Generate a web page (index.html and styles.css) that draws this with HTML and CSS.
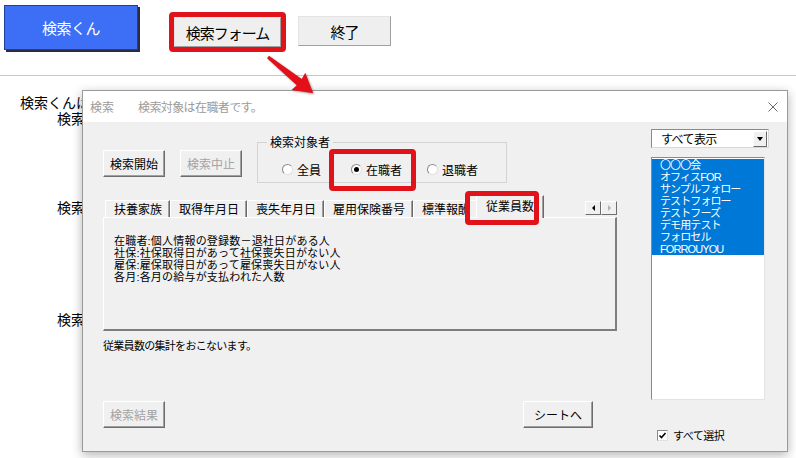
FILE: index.html
```html
<!DOCTYPE html>
<html lang="ja">

<head>
    <meta charset="UTF-8">
    <meta name="viewport" content="width=device-width, initial-scale=1.0">
    <title>検索くん</title>
    <link rel="stylesheet" href="styles.css">
</head>

<body>

    <!-- 上部のボタン -->
    <div class="toolbar">
        <button class="btn-main">検索くん</button>
        <div class="mark mark-form">
            <button class="btn-sheet">検索フォーム</button>
        </div>
        <button class="btn-sheet btn-quit">終了</button>
    </div>
    <hr class="rule">

    <!-- シートの説明文（フォームの後ろ） -->
    <div class="backdrop">
        <p class="bg-line bg-first">検索くんは</p>
        <p class="bg-line">検索</p>
        <p class="bg-line bg-second">検索</p>
        <p class="bg-line bg-third">検索</p>
    </div>

    <!-- 矢印 -->
    <svg class="arrow" width="64" height="50" viewBox="0 0 64 50">
        <g transform="translate(8 7) rotate(38.7)">
            <polygon points="0,-1.5 40,-4 39,-11 58,0 39,11 40,4 0,1.5" fill="#e3101a" />
        </g>
    </svg>

    <!-- 検索フォーム -->
    <div class="dialog">
        <div class="dialog-title">
            <span>検索</span>
            <span class="caption">検索対象は在職者です。</span>
            <svg class="close" width="10" height="10" viewBox="0 0 10 10">
                <path d="M0.5 0.5L9.5 9.5M9.5 0.5L0.5 9.5" stroke="#666" stroke-width="1" fill="none" />
            </svg>
        </div>

        <div class="dialog-body">
            <div class="main-col">

                <div class="control-row">
                    <button class="btn">検索開始</button>
                    <button class="btn is-disabled">検索中止</button>
                    <fieldset class="target-group">
                        <legend>検索対象者</legend>
                        <div class="radio-row">
                            <label class="radio-item opt-all"><span class="radio"></span>全員</label>
                            <label class="radio-item opt-active"><span class="radio is-checked"></span>在職者</label>
                            <label class="radio-item opt-retired"><span class="radio"></span>退職者</label>
                        </div>
                    </fieldset>
                    <div class="mark mark-active"></div>
                </div>

                <div class="tab-strip">
                    <div class="tab">扶養家族</div>
                    <div class="tab">取得年月日</div>
                    <div class="tab">喪失年月日</div>
                    <div class="tab">雇用保険番号</div>
                    <div class="tab">標準報酬</div>
                    <div class="tab is-current">従業員数</div>
                    <div class="tab-scroll">
                        <span class="scroll-btn"><i class="tri-left"></i></span>
                        <span class="scroll-btn"><i class="tri-right"></i></span>
                    </div>
                    <div class="mark mark-tab"></div>
                </div>

                <div class="tab-panel">
                    在職者:個人情報の登録数－退社日がある人<br>
                    社保:社保取得日があって社保喪失日がない人<br>
                    雇保:雇保取得日があって雇保喪失日がない人<br>
                    各月:各月の給与が支払われた人数
                </div>

                <p class="status">従業員数の集計をおこないます。</p>

                <div class="action-row">
                    <button class="btn is-disabled">検索結果</button>
                    <button class="btn btn-wide">シートへ</button>
                </div>
            </div>

            <div class="side-col">
                <div class="combo">
                    <span class="combo-text">すべて表示</span>
                    <span class="combo-btn"><i class="tri-down"></i></span>
                </div>
                <ul class="listbox">
                    <li>〇〇〇会</li>
                    <li>オフィスFOR</li>
                    <li>サンプルフォロー</li>
                    <li>テストフォロー</li>
                    <li>テストフーズ</li>
                    <li>デモ用テスト</li>
                    <li>フォロセル</li>
                    <li>FORROUYOU</li>
                </ul>
                <label class="check-row">
                    <span class="check">
                        <svg width="9" height="9" viewBox="0 0 9 9">
                            <path d="M1.5 4.5L3.5 6.5L7.5 2" stroke="#000" stroke-width="1.6" fill="none" />
                        </svg>
                    </span>
                    すべて選択
                </label>
            </div>
        </div>
    </div>

</body>

</html>
```

FILE: styles.css
```css
* {
    margin: 0;
    padding: 0;
    box-sizing: border-box;
}

body {
    width: 796px;
    height: 458px;
    position: relative;
    overflow: hidden;
    background: #fff;
    color: #000;
    font-family: "Noto Sans CJK JP", "Noto Sans", sans-serif;
}

button {
    font-family: inherit;
    color: #000;
}

/* 上部のボタン */
.toolbar {
    display: flex;
    align-items: flex-start;
    height: 75px;
    padding: 5px 0 0 4px;
}

.btn-main {
    width: 134px;
    height: 45px;
    margin-right: 31px;
    background: #3d6ff6;
    color: #fff;
    border: 1px solid #1d3f9e;
    box-shadow: 2px 2px 0 #2b2b3b;
    font-size: 15px;
    letter-spacing: -0.5px;
}

.btn-sheet {
    width: 107px;
    height: 30px;
    background: #efefef;
    border: 1px solid;
    border-color: #e4e4e4 #a0a0a0 #a0a0a0 #e4e4e4;
    font-size: 15px;
    letter-spacing: -1px;
}

.btn-quit {
    width: 93px;
    margin: 11px 0 0 12px;
}

/* 赤い囲み */
.mark {
    border: 5px solid #e0121a;
    border-radius: 4px;
}

.mark-form {
    margin-top: 7px;
}

.rule {
    border: 0;
    border-top: 1px solid #c8c8c8;
}

/* 後ろのシート */
.backdrop {
    font-family: "Liberation Sans", "Noto Sans CJK JP", sans-serif;
    font-size: 14px;
    line-height: 16px;
}

.bg-line {
    padding-left: 57px;
}

.bg-first {
    padding-left: 20px;
    margin-top: 19px;
}

.bg-second {
    margin-top: 73px;
}

.bg-third {
    margin-top: 96px;
}

.arrow {
    position: absolute;
    left: 260px;
    top: 50px;
    z-index: 5;
    filter: drop-shadow(1px 1px 1px rgba(0, 0, 0, 0.35));
}

/* フォーム */
.dialog {
    position: absolute;
    left: 82px;
    top: 90px;
    width: 706px;
    height: 362px;
    display: flex;
    flex-direction: column;
    background: #f0f0f0;
    border: 1px solid #9a9a9a;
    box-shadow: 0 3px 10px rgba(0, 0, 0, 0.3);
}

.dialog-title {
    height: 31px;
    display: flex;
    align-items: center;
    padding: 0 9px 0 7px;
    background: #fff;
    font-size: 12px;
    color: #9b9b9b;
}

.dialog-title .caption {
    margin-left: 24px;
    letter-spacing: -0.6px;
}

.close {
    margin-left: auto;
}

.dialog-body {
    flex: 1;
    display: flex;
    padding: 7px 18px 0 20px;
}

.main-col {
    width: 514px;
    display: flex;
    flex-direction: column;
    padding-top: 7px;
}

.btn {
    width: 62px;
    height: 27px;
    background: #f0f0f0;
    border: 1px solid;
    border-color: #fff #6d6d6d #6d6d6d #fff;
    box-shadow: inset -1px -1px 0 #a0a0a0;
    font-size: 12px;
}

.btn.is-disabled {
    color: #a3a3a3;
}

.btn-wide {
    width: 70px;
}

.control-row {
    display: flex;
    align-items: flex-start;
    position: relative;
}

.control-row .btn {
    margin-top: 14px;
}

.control-row .btn + .btn {
    margin-left: 15px;
}

.target-group {
    width: 250px;
    min-width: 0;
    margin-left: 15px;
    padding: 14px 0 6px;
    border: 1px solid #d3d3d3;
    font-size: 12px;
}

.target-group legend {
    margin-left: 9px;
    padding: 0 3px;
    font-size: 12px;
    line-height: 12px;
}

.radio-row {
    display: flex;
    align-items: center;
    height: 14px;
}

.radio-item {
    display: flex;
    align-items: center;
    gap: 4px;
}

.opt-all {
    margin-left: 24px;
}

.opt-active {
    margin-left: 30px;
}

.opt-retired {
    margin-left: 25px;
}

.radio {
    width: 11px;
    height: 11px;
    position: relative;
    border-radius: 50%;
    border: 1px solid;
    border-color: #8a8a8a #e0e0e0 #e0e0e0 #8a8a8a;
    background: #fff;
}

.radio.is-checked::after {
    content: "";
    position: absolute;
    left: 2px;
    top: 2px;
    width: 5px;
    height: 5px;
    border-radius: 50%;
    background: #000;
}

.mark-active {
    position: absolute;
    left: 226px;
    top: 13px;
    width: 87px;
    height: 42px;
}

/* タブ */
.tab-strip {
    display: flex;
    align-items: flex-end;
    height: 22px;
    margin-top: 12px;
    padding-left: 2px;
    position: relative;
    font-size: 12px;
}

.tab {
    height: 17px;
    line-height: 16px;
    padding: 0 7px 0 8px;
    border-top: 1px solid #fff;
    border-left: 1px solid #fff;
    border-right: 1px solid #696969;
    box-shadow: inset -1px 0 0 #a0a0a0;
    white-space: nowrap;
}

.tab.is-current {
    height: 23px;
    line-height: 20px;
    margin: 0 0 -1px -2px;
    padding: 0 9px;
    position: relative;
    z-index: 1;
    background: #f0f0f0;
}

.mark-tab {
    position: absolute;
    left: 362px;
    top: -4px;
    width: 74px;
    height: 34px;
    z-index: 2;
}

.tab-scroll {
    display: flex;
    align-self: flex-start;
    margin: 6px 0 0 auto;
}

.scroll-btn {
    width: 16px;
    height: 14px;
    display: flex;
    align-items: center;
    justify-content: center;
    background: #f0f0f0;
    border: 1px solid;
    border-color: #fff #6d6d6d #6d6d6d #fff;
}

.tri-left {
    border-right: 3px solid #000;
    border-top: 3.5px solid transparent;
    border-bottom: 3.5px solid transparent;
}

.tri-right {
    border-left: 3px solid #b0b0b0;
    border-top: 3.5px solid transparent;
    border-bottom: 3.5px solid transparent;
}

/* 行間が詰まっているので欧文フォントを先に置いて行の高さを抑える */
.tab-panel {
    height: 114px;
    padding: 17px 0 0 10px;
    border-top: 1px solid #fff;
    border-left: 1px solid #fff;
    border-right: 2px solid #7e7e7e;
    border-bottom: 2px solid #7e7e7e;
    font-family: "Liberation Sans", "Noto Sans CJK JP", sans-serif;
    font-size: 11px;
    line-height: 12px;
    letter-spacing: 0.2px;
}

.status {
    margin-top: 8px;
    font-size: 11px;
    line-height: 13px;
    letter-spacing: -0.7px;
}

.action-row {
    display: flex;
    justify-content: space-between;
    margin-top: 49px;
    padding-right: 24px;
}

/* 右側のリスト */
.side-col {
    width: 118px;
    margin-left: auto;
    display: flex;
    flex-direction: column;
    align-items: flex-start;
}

.combo {
    width: 118px;
    height: 19px;
    display: flex;
    align-items: flex-start;
    background: #fff;
    border: 1px solid;
    border-color: #8a8a8a #d8d8d8 #d8d8d8 #8a8a8a;
    font-size: 12px;
}

.combo-text {
    flex: 1;
    padding-left: 9px;
    line-height: 17px;
    letter-spacing: -0.6px;
}

.combo-btn {
    width: 14px;
    height: 16px;
    margin: 1px 1px 0 0;
    display: flex;
    align-items: center;
    justify-content: center;
    background: #f0f0f0;
    border: 1px solid;
    border-color: #fff #696969 #696969 #fff;
}

.tri-down {
    border-top: 4px solid #000;
    border-left: 3.5px solid transparent;
    border-right: 3.5px solid transparent;
}

.listbox {
    width: 114px;
    height: 243px;
    margin-top: 9px;
    padding-top: 1px;
    list-style: none;
    background: #fff;
    border: 1px solid;
    border-color: #8a8a8a #e3e3e3 #e3e3e3 #8a8a8a;
    font-family: "Liberation Sans", "Noto Sans CJK JP", sans-serif;
    font-size: 11px;
    line-height: 12px;
}

.listbox li {
    padding-left: 8px;
    background: #0078d7;
    color: #fff;
    letter-spacing: -0.9px;
    white-space: nowrap;
}

.check-row {
    display: flex;
    align-items: center;
    gap: 5px;
    margin: 27px 0 0 6px;
    font-size: 11px;
    letter-spacing: -0.5px;
}

.check {
    width: 11px;
    height: 11px;
    display: flex;
    align-items: center;
    justify-content: center;
    background: #fff;
    border: 1px solid;
    border-color: #8a8a8a #e0e0e0 #e0e0e0 #8a8a8a;
}
```
